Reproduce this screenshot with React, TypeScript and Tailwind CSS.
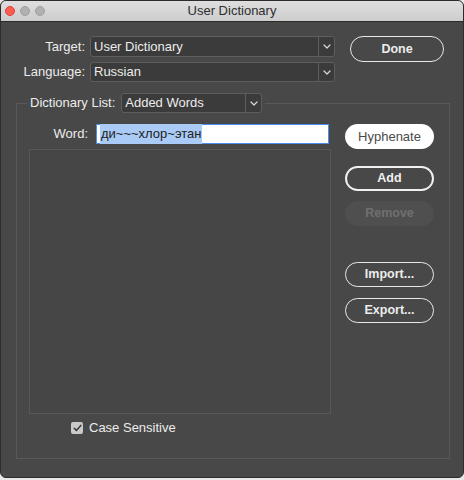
import React from "react";

const Chevron = () => (
  <svg width="8" height="5" viewBox="0 0 8 5" fill="none">
    <path d="M1 1 L4 4 L7 1" stroke="#d8d8d8" strokeWidth="1.2" strokeLinecap="round" strokeLinejoin="round" />
  </svg>
);

const Select = ({ value, w, h }: { value: string; w: string; h: string }) => (
  <div className={`flex ${w} ${h} items-stretch rounded-[3px] border border-[#5e5e5e] bg-[#3b3b3b]`}>
    <div className="flex flex-1 items-center pl-[3px] text-[13px] text-[#ececec]">{value}</div>
    <div className="flex w-[16px] items-center justify-center border-l border-[#5e5e5e]">
      <Chevron />
    </div>
  </div>
);

export default function App() {
  return (
    <div className="h-[480px] w-[464px] bg-[#e8e8e8]" style={{ fontFamily: '"Liberation Sans", Arial, sans-serif' }}>
      <div className="flex h-[478px] w-[464px] flex-col overflow-hidden rounded-[6px] border border-[#2c2c2c] bg-[#484848]">
        {/* Title bar */}
        <div className="relative flex h-[21px] shrink-0 items-center border-b border-[#2a2a2a] bg-gradient-to-b from-[#dedede] to-[#cdcdcd]">
          <div className="flex items-center gap-[5px] pl-[4px]">
            <div className="h-[10px] w-[10px] rounded-full border border-[#d9443b] bg-[#fd5a51]" />
            <div className="h-[10px] w-[10px] rounded-full border border-[#9f9f9f] bg-[#b0b0b0]" />
            <div className="h-[10px] w-[10px] rounded-full border border-[#9f9f9f] bg-[#b0b0b0]" />
          </div>
          <div className="absolute inset-0 flex items-center justify-center text-[13px] text-[#2e2e2e]">User Dictionary</div>
        </div>

        {/* Top rows */}
        <div className="mt-[14px] flex items-start">
          <div className="flex flex-col gap-[5px]">
            <div className="flex items-center">
              <div className="w-[84px] text-right text-[13px] text-[#ececec]">Target:</div>
              <div className="ml-[5px]">
                <Select value="User Dictionary" w="w-[245px]" h="h-[21px]" />
              </div>
            </div>
            <div className="flex items-center">
              <div className="w-[84px] text-right text-[13px] text-[#ececec]">Language:</div>
              <div className="ml-[5px]">
                <Select value="Russian" w="w-[245px]" h="h-[20px]" />
              </div>
            </div>
          </div>
          <button className="ml-[15px] flex h-[26px] w-[94px] items-center justify-center rounded-full border border-[#e8e8e8] text-[12.5px] font-bold text-[#ececec]">
            Done
          </button>
        </div>

        {/* Group box */}
        <div className="ml-[15px] mt-[21px] h-[356px] w-[434px] border border-[#595959]">
          <div className="-mt-[11px] ml-[10px] flex w-fit items-center bg-[#484848] px-[3px]">
            <span className="text-[13px] text-[#ececec]">Dictionary List:</span>
            <div className="ml-[6px]">
              <Select value="Added Words" w="w-[141px]" h="h-[20px]" />
            </div>
          </div>

          <div className="mt-[11px] flex">
            <div className="flex flex-col pl-[12px]">
              <div className="flex items-center">
                <div className="w-[59px] text-right text-[13px] text-[#ececec]">Word:</div>
                <div className="ml-[8px] flex h-[20px] w-[233px] items-center border-[1.5px] border-[#4a8ef0] bg-white pl-[3px]">
                  <span className="bg-[#a9cbf6] px-[1px] text-[13px] text-[#222]">ди~~~хлор~этан</span>
                </div>
              </div>
              <div className="mt-[5px] h-[265px] w-[302px] border border-[#575757] bg-[#464646]" />
              <div className="mt-[4px] flex items-center pl-[42px]">
                <div className="flex h-[12px] w-[12px] items-center justify-center rounded-[2px] bg-[#c9c9c9]">
                  <svg width="9" height="8" viewBox="0 0 9 8" fill="none">
                    <path d="M1.2 4.2 L3.4 6.4 L7.8 1.4" stroke="#3a3a3a" strokeWidth="1.5" strokeLinecap="round" strokeLinejoin="round" />
                  </svg>
                </div>
                <span className="ml-[6px] text-[13px] text-[#ececec]">Case Sensitive</span>
              </div>
            </div>

            <div className="ml-[14px] flex flex-col">
              <button className="flex h-[25px] w-[89px] items-center justify-center rounded-full bg-white text-[13px] text-[#4a4a4a]">
                Hyphenate
              </button>
              <button className="mt-[17px] flex h-[25px] w-[89px] items-center justify-center rounded-full border-2 border-[#f0f0f0] text-[12.5px] font-bold text-[#f0f0f0]">
                Add
              </button>
              <button className="mt-[10px] flex h-[25px] w-[89px] items-center justify-center rounded-full bg-[#4f4f4f] text-[12.5px] font-bold text-[#6f6f6f]">
                Remove
              </button>
              <button className="mt-[36px] flex h-[25px] w-[89px] items-center justify-center rounded-full border border-[#e8e8e8] text-[12.5px] font-bold text-[#ececec]">
                Import...
              </button>
              <button className="mt-[11px] flex h-[25px] w-[89px] items-center justify-center rounded-full border border-[#e8e8e8] text-[12.5px] font-bold text-[#ececec]">
                Export...
              </button>
            </div>
          </div>
        </div>
      </div>
    </div>
  );
}
